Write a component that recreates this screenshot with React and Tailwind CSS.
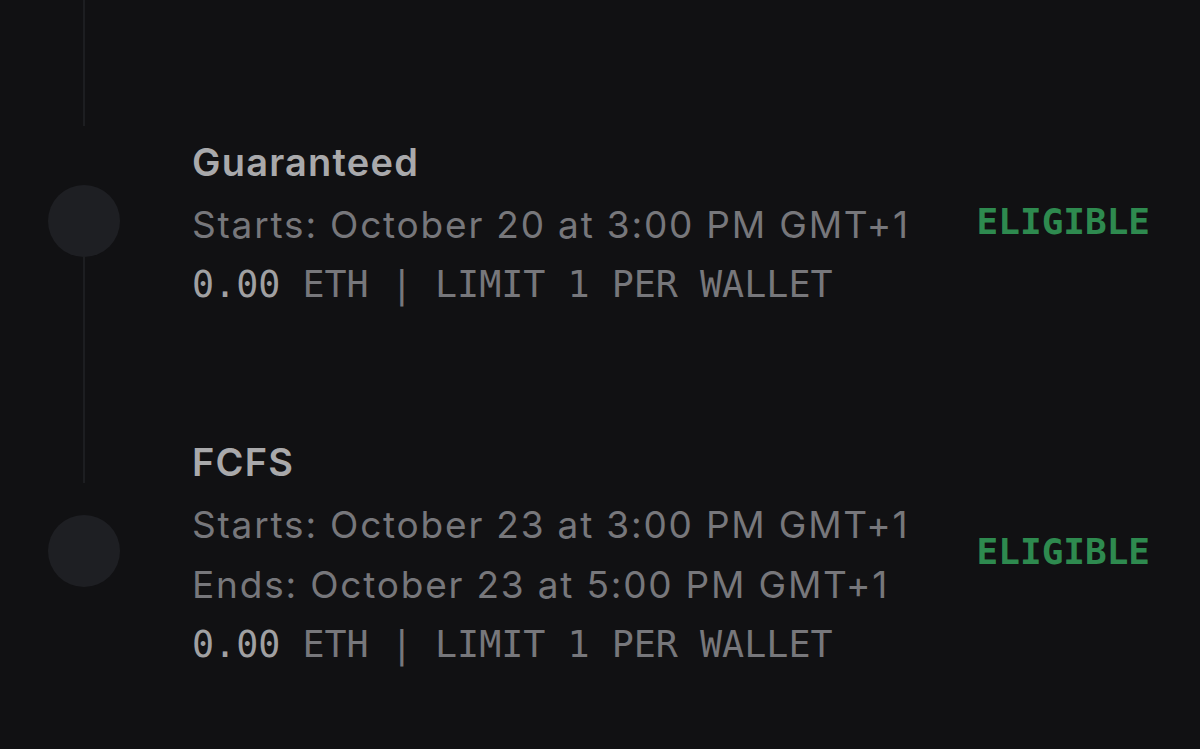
import React from 'react';

const phases = [
  {
    name: 'Guaranteed',
    lines: ['Starts: October 20 at 3:00 PM GMT+1'],
  },
  {
    name: 'FCFS',
    lines: ['Starts: October 23 at 3:00 PM GMT+1', 'Ends: October 23 at 5:00 PM GMT+1'],
  },
];

const Phase = ({ phase }) => (
  <div className="flex items-center justify-between">
    <div className="flex flex-col">
      <div className="text-[38px] leading-[60px] font-semibold tracking-[1.2px] text-[#a9a9ab] mb-[3px]">{phase.name}</div>
      {phase.lines.map((line) => (
        <div key={line} className="text-[37px] leading-[60px] tracking-[1.8px] text-[#77777b]">{line}</div>
      ))}
      <div className="text-[36.7px] leading-[60px] text-[#77777b]" style={{ fontFamily: '"DejaVu Sans Mono", monospace' }}>
        <span className="text-[#a0a0a2]">0.00</span> ETH | LIMIT 1 PER WALLET
      </div>
    </div>
    <div className="text-[36px] font-semibold text-[#2e8a4f] -mt-[4px]" style={{ fontFamily: '"DejaVu Sans Mono", monospace' }}>
      ELIGIBLE
    </div>
  </div>
);

export default function App() {
  return (
    <div className="w-[1200px] h-[749px] bg-[#111113] flex overflow-hidden" style={{ fontFamily: 'Inter, "Noto Sans", sans-serif' }}>
      {/* timeline */}
      <div className="w-[168px] shrink-0 flex flex-col items-center">
        <div className="w-[2px] h-[126px] bg-[#1d1e21]" />
        <div className="h-[59px]" />
        <div className="w-[72px] h-[72px] rounded-full bg-[#1e1f23]" />
        <div className="w-[2px] h-[226px] bg-[#1d1e21]" />
        <div className="h-[32px]" />
        <div className="w-[72px] h-[72px] rounded-full bg-[#1e1f23]" />
      </div>
      <div className="flex-1 flex flex-col pl-[24px] pr-[50px] pt-[132px] gap-[117px]">
        {phases.map((p) => (
          <Phase key={p.name} phase={p} />
        ))}
      </div>
    </div>
  );
}
